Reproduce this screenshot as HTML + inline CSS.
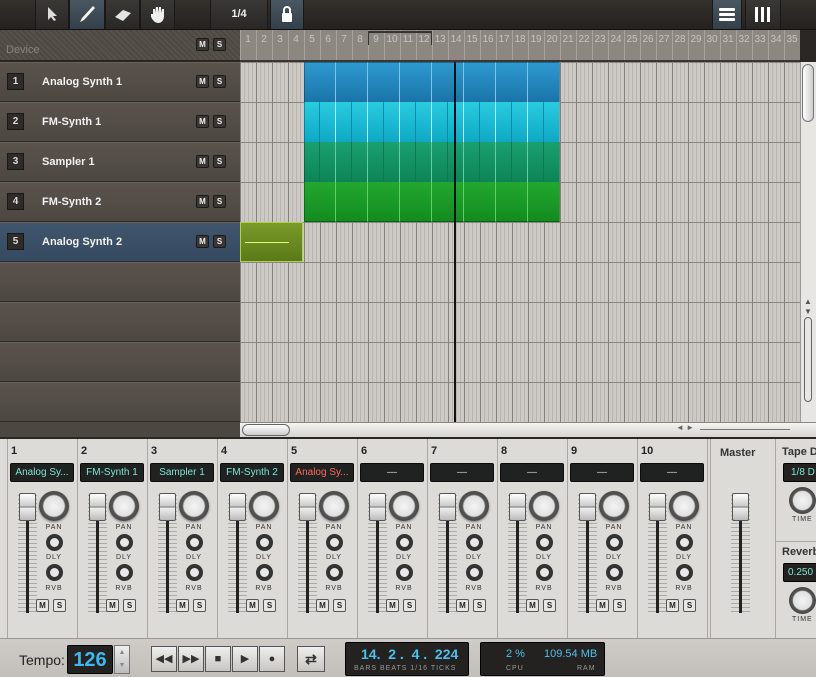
<!DOCTYPE html>
<html><head><meta charset="utf-8"><style>
*{margin:0;padding:0;box-sizing:border-box}
body{width:816px;height:677px;overflow:hidden;background:#d8d6d2;font-family:"Liberation Sans",sans-serif;position:relative}
.a{position:absolute}
#top{left:0;top:0;width:816px;height:30px;background:linear-gradient(#34302c,#24211f);border-bottom:1px solid #111}
.tb{top:0;height:29px;background:linear-gradient(#3a3835,#2a2826);border-left:1px solid #1a1816;border-right:1px solid #1a1816;color:#eee;font-weight:bold;font-size:11px;text-align:center;line-height:29px}
#hdr{left:0;top:30px;width:240px;height:32px;background:repeating-linear-gradient(45deg,#4e4843 0 2px,#57514b 2px 4px);border-bottom:2px solid #2a2522}
.ms{width:13px;height:13px;background:#3a3633;border:1px solid #1c1a18;color:#eee;font-size:8px;font-weight:bold;text-align:center;line-height:11px;border-radius:2px}
#ruler{left:240px;top:30px;width:560px;height:32px;background:#8d8782;border-bottom:2px solid #3a3532;
 background-image:repeating-linear-gradient(90deg,#a8a39e 0 1px,transparent 1px 16px)}
.rn{top:34px;font-size:10px;color:#c8c4c0;width:16px;text-align:center}
.tr{left:0;width:240px;height:40px;background:linear-gradient(#5a534d,#4d4742);border-top:1px solid #6a635d;border-bottom:1px solid #2e2a27}
.tr .n{position:absolute;left:7px;top:10px;width:17px;height:17px;background:#2e2b28;border:1px solid #1a1816;color:#ddd;font-size:10px;font-weight:bold;text-align:center;line-height:15px}
.tr .t{position:absolute;left:42px;top:13px;color:#f2f2f2;font-size:11px;font-weight:bold}
#grid{left:240px;top:62px;width:560px;height:360px;background:#cdcac6;
 background-image:repeating-linear-gradient(0deg,transparent 0 39px,#8a8682 39px 40px),repeating-linear-gradient(90deg,#85817d 0 1px,transparent 1px 16px),repeating-linear-gradient(90deg,#b8b5b1 0 1px,transparent 1px 4px)}
#mix{left:0;top:437px;width:816px;height:201px;background:#dddbd7;border-top:2px solid #2a2725}
.ch{top:439px;width:70px;height:199px;border-right:1px solid #aaa7a2}
.ch .num{position:absolute;left:3px;top:6px;font-size:11px;font-weight:bold;color:#222}
.lab{position:absolute;left:2px;top:24px;width:64px;height:19px;background:#1f2221;border:1px solid #0c0c0c;border-radius:2px;color:#7fe6d6;font-size:10px;text-align:center;line-height:17px;white-space:nowrap;overflow:hidden}
.rail{position:absolute;left:18px;top:56px;width:3px;height:118px;background:#222}
.scale{position:absolute;left:10px;top:56px;width:19px;height:118px;background:repeating-linear-gradient(#aaa 0 1px,transparent 1px 4px)}
.cap{position:absolute;left:11px;top:54px;width:17px;height:28px;background:linear-gradient(#fff,#ccc 45%,#888 50%,#eee 55%,#bbb);border:1px solid #555;border-radius:2px}
.pan{position:absolute;left:31px;top:52px;width:30px;height:30px;border-radius:50%;background:radial-gradient(#f4f4f4 0,#e0e0e0 48%,#555 54%,#3a3a3a 90%,#222);box-shadow:0 1px 2px #777}
.sk{position:absolute;left:38px;width:17px;height:17px;border-radius:50%;border:4px solid #333;background:#e8e8e8}
.kl{position:absolute;left:26px;width:40px;text-align:center;font-size:7px;letter-spacing:1px;color:#333}
.mb{position:absolute;top:160px;width:13px;height:13px;border:1px solid #555;background:#e8e6e2;font-size:8px;font-weight:bold;text-align:center;line-height:11px;color:#222;border-radius:2px}
#tp{left:0;top:638px;width:816px;height:39px;background:linear-gradient(#cfccc8,#c2bfba);border-top:1px solid #999}
.lcd{background:#232221;border:1px solid #000;border-radius:2px}
.btn{top:646px;width:26px;height:26px;background:linear-gradient(#eee,#c8c6c2);border:1px solid #555;color:#333;font-size:11px;text-align:center;line-height:24px}
</style></head><body>
<div id="top" class="a"></div>
<div class="a tb" style="left:35px;width:34px"><svg width="14" height="16" style="margin-top:6px"><path d="M3 1 L3 14 L6 11 L9 15 L11 14 L8 10 L12 10 Z" fill="#ddd"/></svg></div>
<div class="a tb" style="left:69px;width:36px;background:linear-gradient(#4a5660,#33404a)"><svg width="18" height="20" style="margin-top:4px"><path d="M15 2 L17 4 L6 16 L2 18 L4 14 Z" fill="#f4f4f4"/></svg></div>
<div class="a tb" style="left:105px;width:35px"><svg width="20" height="16" style="margin-top:7px"><path d="M2 10 L10 3 L18 6 L10 14 Z" fill="#e4e4e4"/></svg></div>
<div class="a tb" style="left:140px;width:35px"><svg width="18" height="20" style="margin-top:5px"><path d="M4 9 L4 4 L6 4 L6 8 L7 2 L9 2 L9 8 L10 2 L12 2 L12 8 L13 4 L15 4 L15 12 Q14 18 9 18 Q5 18 2 12 L2 9 Z" fill="#eee"/></svg></div>
<div class="a tb" style="left:210px;width:58px">1/4</div>
<div class="a tb" style="left:270px;width:34px;background:linear-gradient(#4a5660,#33404a)"><svg width="14" height="18" style="margin-top:5px"><path d="M4 8 V5 A3 3 0 0 1 10 5 V8" stroke="#fff" stroke-width="2" fill="none"/><rect x="2" y="8" width="10" height="9" rx="1" fill="#fff"/></svg></div>
<div class="a tb" style="left:712px;width:30px;background:linear-gradient(#4a5660,#33404a)"><svg width="16" height="14" style="margin-top:8px"><rect y="0" width="16" height="3" rx="1" fill="#fff"/><rect y="5" width="16" height="3" rx="1" fill="#fff"/><rect y="10" width="16" height="3" rx="1" fill="#fff"/></svg></div>
<div class="a tb" style="left:745px;width:36px"><svg width="16" height="16" style="margin-top:7px"><rect x="0" width="3" height="15" fill="#fff"/><rect x="6" width="3" height="15" fill="#fff"/><rect x="12" width="3" height="15" fill="#fff"/></svg></div>

<div id="hdr" class="a"><div class="a" style="left:6px;top:14px;color:#8a847e;font-size:11px">Device</div>
<div class="a ms" style="left:196px;top:8px">M</div><div class="a ms" style="left:213px;top:8px">S</div></div>
<div id="ruler" class="a"></div>
<div class="a" style="left:368px;top:31px;width:64px;height:14px;border:1px solid #333;border-bottom:none;border-top:2px solid #333"></div>
<div class="a rn" style="left:240px">1</div><div class="a rn" style="left:256px">2</div><div class="a rn" style="left:272px">3</div><div class="a rn" style="left:288px">4</div><div class="a rn" style="left:304px">5</div><div class="a rn" style="left:320px">6</div><div class="a rn" style="left:336px">7</div><div class="a rn" style="left:352px">8</div><div class="a rn" style="left:368px">9</div><div class="a rn" style="left:384px">10</div><div class="a rn" style="left:400px">11</div><div class="a rn" style="left:416px">12</div><div class="a rn" style="left:432px">13</div><div class="a rn" style="left:448px">14</div><div class="a rn" style="left:464px">15</div><div class="a rn" style="left:480px">16</div><div class="a rn" style="left:496px">17</div><div class="a rn" style="left:512px">18</div><div class="a rn" style="left:528px">19</div><div class="a rn" style="left:544px">20</div><div class="a rn" style="left:560px">21</div><div class="a rn" style="left:576px">22</div><div class="a rn" style="left:592px">23</div><div class="a rn" style="left:608px">24</div><div class="a rn" style="left:624px">25</div><div class="a rn" style="left:640px">26</div><div class="a rn" style="left:656px">27</div><div class="a rn" style="left:672px">28</div><div class="a rn" style="left:688px">29</div><div class="a rn" style="left:704px">30</div><div class="a rn" style="left:720px">31</div><div class="a rn" style="left:736px">32</div><div class="a rn" style="left:752px">33</div><div class="a rn" style="left:768px">34</div><div class="a rn" style="left:784px">35</div>
<div class="a" style="left:800px;top:30px;width:16px;height:32px;background:#2a2725"></div>

<div class="a tr" style="top:62px"><div class="n">1</div><div class="t">Analog Synth 1</div><div class="a ms" style="left:196px;top:12px">M</div><div class="a ms" style="left:213px;top:12px">S</div></div>
<div class="a tr" style="top:102px"><div class="n">2</div><div class="t">FM-Synth 1</div><div class="a ms" style="left:196px;top:12px">M</div><div class="a ms" style="left:213px;top:12px">S</div></div>
<div class="a tr" style="top:142px"><div class="n">3</div><div class="t">Sampler 1</div><div class="a ms" style="left:196px;top:12px">M</div><div class="a ms" style="left:213px;top:12px">S</div></div>
<div class="a tr" style="top:182px"><div class="n">4</div><div class="t">FM-Synth 2</div><div class="a ms" style="left:196px;top:12px">M</div><div class="a ms" style="left:213px;top:12px">S</div></div>
<div class="a tr" style="top:222px;background:linear-gradient(#44597080,#354a60);background-color:#3d5268"><div class="n">5</div><div class="t">Analog Synth 2</div><div class="a ms" style="left:196px;top:12px">M</div><div class="a ms" style="left:213px;top:12px">S</div></div>
<div class="a tr" style="top:262px"></div><div class="a tr" style="top:302px"></div><div class="a tr" style="top:342px"></div><div class="a tr" style="top:382px"></div>
<div class="a" style="left:0;top:422px;width:240px;height:15px;background:#4d4742"></div>

<div id="grid" class="a"></div>
<div class="a" style="left:304px;top:62px;width:256px;height:40px;background:repeating-linear-gradient(90deg,transparent 0 31px,#7fc4e8 31px 32px),linear-gradient(#2e9ad0,#1a74a8)"></div>
<div class="a" style="left:304px;top:102px;width:256px;height:40px;background:repeating-linear-gradient(90deg,transparent 0 31px,#a8f0f8 31px 32px),repeating-linear-gradient(90deg,transparent 0 15px,#0a8ca8 15px 16px),linear-gradient(#28cce0,#0fa8c4)"></div>
<div class="a" style="left:304px;top:142px;width:256px;height:40px;background:repeating-linear-gradient(90deg,transparent 0 31px,#5fd0a0 31px 32px),repeating-linear-gradient(90deg,transparent 0 15px,#0a7a50 15px 16px),linear-gradient(#1aa070,#0e8458)"></div>
<div class="a" style="left:304px;top:182px;width:256px;height:40px;background:repeating-linear-gradient(90deg,transparent 0 31px,#60d060 31px 32px),linear-gradient(#22a830,#138a20)"></div>
<div class="a" style="left:304px;top:62px;width:256px;height:160px;box-shadow:inset 0 0 0 1px rgba(0,0,0,.3)"></div>
<div class="a" style="left:240px;top:222px;width:63px;height:40px;background:linear-gradient(#7a9a2a,#5a7a18);border:1px solid #b0d050"><div class="a" style="left:4px;top:19px;width:44px;height:1px;background:#e0ff70"></div></div>
<div class="a" style="left:454px;top:62px;width:2px;height:360px;background:#111"></div>
<div class="a" style="left:800px;top:62px;width:16px;height:360px;background:#e8e6e3;border-left:1px solid #999"><div class="a" style="left:1px;top:2px;width:12px;height:58px;border:1px solid #777;border-radius:6px;background:linear-gradient(90deg,#fff,#ccc)"></div><div class="a" style="left:3px;top:235px;font-size:8px;color:#555">▲</div><div class="a" style="left:3px;top:245px;font-size:8px;color:#555">▼</div><div class="a" style="left:3px;top:255px;width:8px;height:85px;border:1px solid #666;border-radius:4px"></div></div>
<div class="a" style="left:240px;top:422px;width:576px;height:15px;background:linear-gradient(#f4f3f1,#d6d4d0);border-top:1px solid #888"><div class="a" style="left:2px;top:1px;width:48px;height:12px;border:1px solid #666;border-radius:6px;background:linear-gradient(#fff,#ccc)"></div><div class="a" style="left:436px;top:0;font-size:8px;color:#666">◄ ►</div><div class="a" style="left:460px;top:6px;width:90px;height:1px;background:#777"></div></div>

<div id="mix" class="a"></div>
<div class="a ch" style="left:8px"><div class="num">1</div><div class="lab">Analog Sy...</div><div class="scale"></div><div class="rail"></div><div class="cap"></div><div class="pan"></div><div class="sk" style="top:95px"></div><div class="kl" style="top:85px">PAN</div><div class="kl" style="top:115px">DLY</div><div class="sk" style="top:125px"></div><div class="kl" style="top:146px">RVB</div><div class="mb" style="left:28px">M</div><div class="mb" style="left:45px">S</div></div>
<div class="a ch" style="left:78px"><div class="num">2</div><div class="lab">FM-Synth 1</div><div class="scale"></div><div class="rail"></div><div class="cap"></div><div class="pan"></div><div class="sk" style="top:95px"></div><div class="kl" style="top:85px">PAN</div><div class="kl" style="top:115px">DLY</div><div class="sk" style="top:125px"></div><div class="kl" style="top:146px">RVB</div><div class="mb" style="left:28px">M</div><div class="mb" style="left:45px">S</div></div>
<div class="a ch" style="left:148px"><div class="num">3</div><div class="lab">Sampler 1</div><div class="scale"></div><div class="rail"></div><div class="cap"></div><div class="pan"></div><div class="sk" style="top:95px"></div><div class="kl" style="top:85px">PAN</div><div class="kl" style="top:115px">DLY</div><div class="sk" style="top:125px"></div><div class="kl" style="top:146px">RVB</div><div class="mb" style="left:28px">M</div><div class="mb" style="left:45px">S</div></div>
<div class="a ch" style="left:218px"><div class="num">4</div><div class="lab">FM-Synth 2</div><div class="scale"></div><div class="rail"></div><div class="cap"></div><div class="pan"></div><div class="sk" style="top:95px"></div><div class="kl" style="top:85px">PAN</div><div class="kl" style="top:115px">DLY</div><div class="sk" style="top:125px"></div><div class="kl" style="top:146px">RVB</div><div class="mb" style="left:28px">M</div><div class="mb" style="left:45px">S</div></div>
<div class="a ch" style="left:288px"><div class="num">5</div><div class="lab" style="color:#ff6a5a">Analog Sy...</div><div class="scale"></div><div class="rail"></div><div class="cap"></div><div class="pan"></div><div class="sk" style="top:95px"></div><div class="kl" style="top:85px">PAN</div><div class="kl" style="top:115px">DLY</div><div class="sk" style="top:125px"></div><div class="kl" style="top:146px">RVB</div><div class="mb" style="left:28px">M</div><div class="mb" style="left:45px">S</div></div>
<div class="a ch" style="left:358px"><div class="num">6</div><div class="lab" style="color:#ccc">—</div><div class="scale"></div><div class="rail"></div><div class="cap"></div><div class="pan"></div><div class="sk" style="top:95px"></div><div class="kl" style="top:85px">PAN</div><div class="kl" style="top:115px">DLY</div><div class="sk" style="top:125px"></div><div class="kl" style="top:146px">RVB</div><div class="mb" style="left:28px">M</div><div class="mb" style="left:45px">S</div></div>
<div class="a ch" style="left:428px"><div class="num">7</div><div class="lab" style="color:#ccc">—</div><div class="scale"></div><div class="rail"></div><div class="cap"></div><div class="pan"></div><div class="sk" style="top:95px"></div><div class="kl" style="top:85px">PAN</div><div class="kl" style="top:115px">DLY</div><div class="sk" style="top:125px"></div><div class="kl" style="top:146px">RVB</div><div class="mb" style="left:28px">M</div><div class="mb" style="left:45px">S</div></div>
<div class="a ch" style="left:498px"><div class="num">8</div><div class="lab" style="color:#ccc">—</div><div class="scale"></div><div class="rail"></div><div class="cap"></div><div class="pan"></div><div class="sk" style="top:95px"></div><div class="kl" style="top:85px">PAN</div><div class="kl" style="top:115px">DLY</div><div class="sk" style="top:125px"></div><div class="kl" style="top:146px">RVB</div><div class="mb" style="left:28px">M</div><div class="mb" style="left:45px">S</div></div>
<div class="a ch" style="left:568px"><div class="num">9</div><div class="lab" style="color:#ccc">—</div><div class="scale"></div><div class="rail"></div><div class="cap"></div><div class="pan"></div><div class="sk" style="top:95px"></div><div class="kl" style="top:85px">PAN</div><div class="kl" style="top:115px">DLY</div><div class="sk" style="top:125px"></div><div class="kl" style="top:146px">RVB</div><div class="mb" style="left:28px">M</div><div class="mb" style="left:45px">S</div></div>
<div class="a ch" style="left:638px;width:70px"><div class="num">10</div><div class="lab" style="color:#ccc">—</div><div class="scale"></div><div class="rail"></div><div class="cap"></div><div class="pan"></div><div class="sk" style="top:95px"></div><div class="kl" style="top:85px">PAN</div><div class="kl" style="top:115px">DLY</div><div class="sk" style="top:125px"></div><div class="kl" style="top:146px">RVB</div><div class="mb" style="left:28px">M</div><div class="mb" style="left:45px">S</div></div>
<div class="a" style="left:0;top:439px;width:8px;height:199px;border-right:1px solid #aaa7a2"></div>
<div class="a ch" style="left:710px;width:66px;border-left:1px solid #aaa7a2"><div class="a" style="left:9px;top:8px;font-size:11px;font-weight:bold;color:#333">Master</div><div class="scale" style="left:20px"></div><div class="rail" style="left:28px"></div><div class="cap" style="left:21px"></div></div>
<div class="a" style="left:776px;top:439px;width:40px;height:199px">
<div class="a" style="left:6px;top:7px;font-size:11px;font-weight:bold;color:#333;white-space:nowrap">Tape D</div>
<div class="a lcd" style="left:7px;top:24px;width:40px;height:19px;color:#7fe6d6;font-size:10px;line-height:17px;padding-left:7px;white-space:nowrap">1/8 D</div>
<div class="a" style="left:13px;top:48px;width:27px;height:27px;border-radius:50%;background:radial-gradient(#f4f4f4 0,#e0e0e0 48%,#555 54%,#333 90%)"></div>
<div class="a" style="left:16px;top:77px;font-size:7px;letter-spacing:1px;color:#333">TIME</div>
<div class="a" style="left:0;top:102px;width:40px;height:1px;background:#aaa"></div>
<div class="a" style="left:6px;top:107px;font-size:11px;font-weight:bold;color:#333;white-space:nowrap">Reverb</div>
<div class="a lcd" style="left:7px;top:124px;width:40px;height:19px;color:#7fe6d6;font-size:10px;line-height:17px;padding-left:4px">0.250</div>
<div class="a" style="left:13px;top:148px;width:27px;height:27px;border-radius:50%;background:radial-gradient(#f4f4f4 0,#e0e0e0 48%,#555 54%,#333 90%)"></div>
<div class="a" style="left:16px;top:177px;font-size:7px;letter-spacing:1px;color:#333">TIME</div></div>

<div id="tp" class="a"></div>
<div class="a" style="left:19px;top:652px;font-size:14px;color:#222">Tempo:</div>
<div class="a lcd" style="left:67px;top:645px;width:46px;height:29px;color:#3ab8f0;font-size:20px;font-weight:bold;text-align:center;line-height:28px">126</div>
<div class="a" style="left:114px;top:645px;width:16px;height:29px;background:linear-gradient(#eee,#bbb);border:1px solid #777;font-size:7px;color:#888;text-align:center;line-height:13px">▲<br>▼</div>
<div class="a btn" style="left:151px">◀◀</div><div class="a btn" style="left:178px">▶▶</div><div class="a btn" style="left:205px">■</div><div class="a btn" style="left:232px">▶</div><div class="a btn" style="left:259px">●</div>
<div class="a btn" style="left:297px;width:28px;font-weight:bold;font-size:14px">⇄</div>
<div class="a lcd" style="left:345px;top:642px;width:124px;height:34px"><div class="a" style="left:15px;top:3px;color:#4cc0f0;font-size:14px;font-weight:bold;white-space:nowrap">14. &nbsp;2 . &nbsp;4 . &nbsp;224</div><div class="a" style="left:8px;top:22px;color:#999;font-size:7px;letter-spacing:1px;white-space:nowrap">BARS BEATS 1/16 TICKS</div></div>
<div class="a lcd" style="left:480px;top:642px;width:125px;height:34px"><div class="a" style="left:25px;top:5px;color:#4cc0f0;font-size:11px;white-space:nowrap">2 %</div><div class="a" style="left:63px;top:5px;color:#4cc0f0;font-size:11px;white-space:nowrap">109.54 MB</div><div class="a" style="left:25px;top:22px;color:#999;font-size:7px;letter-spacing:1px">CPU</div><div class="a" style="left:96px;top:22px;color:#999;font-size:7px;letter-spacing:1px">RAM</div></div>
</body></html>
